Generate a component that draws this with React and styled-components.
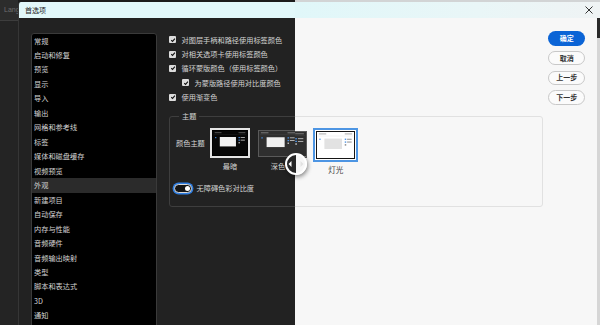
import React from 'react';
import styled, { createGlobalStyle } from 'styled-components';

const Global = createGlobalStyle`
  html, body { margin: 0; padding: 0; background: #222; }
  body { font-family: "Noto Sans CJK SC", "Noto Sans", sans-serif; }
  * { box-sizing: border-box; }
`;

const FONT = `"Noto Sans CJK SC", "Noto Sans", sans-serif`;

const Stage = styled.div`
  position: relative;
  width: 600px;
  height: 325px;
  display: flex;
  overflow: hidden;
  font-family: ${FONT};
`;

/* ---------- dark half ---------- */
const DarkSide = styled.div`
  flex: 0 0 295px;
  display: flex;
  overflow: hidden;
  background: #1c1c1c;
`;

const AppStrip = styled.div`
  flex: 0 0 18px;
  display: flex;
  flex-direction: column;
  background: #242424;
  overflow: hidden;
`;

const AppTab = styled.div`
  height: 21px;
  border-bottom: 1px solid #3d3d3d;
  background: #2c2c2c;
  color: #6e6e6e;
  font: 7px/20px "Liberation Sans", sans-serif;
  padding-left: 4px;
  white-space: nowrap;
`;

const DarkDialog = styled.div`
  flex: 1;
  min-width: 0;
  margin-top: 2px;
  display: flex;
  flex-direction: column;
  border-left: 1px solid #363636;
  border-top-left-radius: 3px;
  overflow: hidden;
`;

const TitleBar = styled.div`
  flex: 0 0 16px;
  display: flex;
  align-items: center;
  padding: 0 7px 0 6px;
  background: ${(p) => (p.$light ? 'linear-gradient(90deg, #e0f7f9 0%, #e9f6f7 60%, #eff3f4 100%)' : '#e2f8fa')};
  color: #222;
  font-size: 7px;
  justify-content: ${(p) => (p.$light ? 'flex-end' : 'flex-start')};
`;

const DarkBody = styled.div`
  flex: 1;
  display: flex;
  gap: 12px;
  padding: 14.5px 0 0 12px;
  background: #222222;
  overflow: hidden;
`;

const NavList = styled.ul`
  flex: 0 0 126px;
  height: 300px;
  margin: 0;
  padding: 0;
  list-style: none;
  background: #000;
  border: 1px solid #3a3a3a;
  border-radius: 3px;
`;

const NavItem = styled.li`
  height: 14.47px;
  line-height: 14.47px;
  padding-left: 2px;
  font-size: 7.2px;
  color: #d2d2d2;
  background: ${(p) => (p.$active ? '#2b2b2b' : 'transparent')};
  white-space: nowrap;
`;

const Main = styled.div`
  flex: none;
  display: flex;
  flex-direction: column;
  align-items: flex-start;
`;

const CheckRow = styled.label`
  height: 14.4px;
  display: flex;
  align-items: center;
  gap: 5.5px;
  padding-left: ${(p) => (p.$indent ? '13px' : '0')};
  font-size: 7.2px;
  color: #d4d4d4;
  white-space: nowrap;
`;

const Box = styled.span`
  width: 7px;
  height: 7px;
  border-radius: 1px;
  background: #dcdcdc;
  display: flex;
  align-items: center;
  justify-content: center;
`;

const Check = () => (
  <Box>
    <svg width="6" height="6" viewBox="0 0 10 10">
      <path d="M2 5.2 L4.2 7.4 L8.2 2.6" fill="none" stroke="#111" strokeWidth="1.8" />
    </svg>
  </Box>
);

const Fieldset = styled.fieldset`
  flex: none;
  width: 375px;
  height: 96px;
  margin: 7px 0 0 0;
  padding: 7px 6px 0 6px;
  border: 1px solid #3e3e3e;
  border-radius: 3px;
  min-width: 0;
`;

const Legend = styled.legend`
  margin-left: 3px;
  padding: 0 3px;
  font-size: 7.2px;
  line-height: 10px;
  color: #d4d4d4;
`;

const ThemeRow = styled.div`
  display: flex;
  align-items: flex-start;
`;

const RowLabel = styled.div`
  width: 34px;
  flex: none;
  height: 30px;
  line-height: 30px;
  font-size: 7.2px;
  color: #d4d4d4;
  white-space: nowrap;
`;

const Options = styled.div`
  display: flex;
  gap: ${(p) => p.$gap}px;
`;

const Option = styled.div`
  width: ${(p) => p.$w}px;
  display: flex;
  flex-direction: column;
  align-items: center;
  flex: none;
`;

const Frame = styled.div`
  width: 100%;
  display: flex;
  height: ${(p) => p.$h}px;
  margin-top: ${(p) => p.$mt || 0}px;
  border: ${(p) => p.$border};
  padding: ${(p) => p.$pad || 0}px;
  background: ${(p) => p.$bg || 'transparent'};
`;

const Inner = styled.div`
  flex: 1;
  display: flex;
  border: ${(p) => p.$border || 'none'};
`;

const Caption = styled.div`
  margin-top: ${(p) => p.$mt}px;
  font-size: ${(p) => p.$size}px;
  line-height: 10px;
  color: ${(p) => p.$color};
  white-space: nowrap;
`;

const palettes = {
  darkest: { bg: '#070707', line: '#6a6a6a', card: '#f2f2f2', text: '#cfcfcf', div: '#222' },
  dark: { bg: '#2f2f2f', line: '#8a8a8a', card: '#f0f0f0', text: '#d0d0d0', div: '#444' },
  light: { bg: '#ffffff', line: '#9a9a9a', card: '#e2e2e2', text: '#7a7a7a', div: '#e6e6e6' },
};

const Preview = ({ variant }) => {
  const p = palettes[variant];
  return (
    <svg width="100%" height="100%" viewBox="0 0 40 28" preserveAspectRatio="none" style={{ display: 'block' }}>
      <rect width="40" height="28" fill={p.bg} />
      <rect x="2" y="1.6" width="8" height="0.9" fill={p.line} />
      <rect x="30" y="1.6" width="8" height="0.9" fill={p.line} />
      <rect x="1" y="4" width="38" height="0.5" fill={p.div} />
      <rect x="2.5" y="7" width="1.4" height="1.4" fill="#4a90e2" />
      <rect x="8" y="7" width="19" height="11" fill={p.card} />
      <rect x="30" y="7" width="1.6" height="1.4" fill="#4a90e2" />
      <rect x="32.5" y="7.2" width="5" height="0.9" fill={p.text} />
      <rect x="30" y="10" width="1.6" height="1.4" fill="#4a90e2" />
      <rect x="32.5" y="10.2" width="5" height="0.9" fill={p.text} />
      <rect x="30" y="13" width="1.6" height="1.4" fill={p.text} />
    </svg>
  );
};

const ToggleRow = styled.div`
  margin: 12.3px 0 0 -2px;
  display: flex;
  align-items: center;
  gap: 4.5px;
  font-size: 7.2px;
  color: #d4d4d4;
  white-space: nowrap;
`;

const Switch = styled.span`
  width: 18px;
  height: 9.4px;
  border-radius: 5px;
  border: 1px solid #d8d8d8;
  box-shadow: 0 0 0 1.4px #2f7fe3;
  background: #151515;
  display: flex;
  align-items: center;
  justify-content: flex-end;
  padding-right: 1.5px;
  &::after {
    content: '';
    width: 5px;
    height: 5px;
    border-radius: 50%;
    background: #fff;
  }
`;

/* ---------- light half ---------- */
const LightSide = styled.div`
  flex: 1;
  display: flex;
  flex-direction: column;
  background: #f7f7f7;
  border-top: 2px solid #d2d4d5;
  overflow: hidden;
`;

const LightBody = styled.div`
  flex: 1;
  display: flex;
`;

const LightContent = styled.div`
  flex: 1;
  min-width: 0;
  padding-right: 5.3px;
`;

const LightPanel = styled.div`
  margin: 98.4px 0 0 -40px;
  height: 91px;
  border: 1px solid #e1e1e1;
  border-radius: 3px;
  padding: 10.6px 0 0 5.7px;
`;

const Buttons = styled.div`
  flex: 0 0 36.7px;
  margin: 13.4px 12px 0 0;
  display: flex;
  flex-direction: column;
  gap: 5.3px;
`;

const Button = styled.button`
  height: 14.4px;
  padding: 0;
  border-radius: 8px;
  border: ${(p) => (p.$primary ? 'none' : '1px solid #c8c8c8')};
  background: ${(p) => (p.$primary ? '#0b64d6' : '#fbfbfb')};
  color: ${(p) => (p.$primary ? '#fff' : '#333')};
  font-family: ${FONT};
  font-size: 7px;
  font-weight: 700;
  line-height: 1;
`;

const Scrollbar = styled.div`
  flex: 0 0 3px;
  display: flex;
  flex-direction: column;
  background: #d6d6d6;
  &::before {
    content: '';
    height: 20px;
    background: #2a2a2a;
  }
`;

const Handle = styled.div`
  position: absolute;
  left: 285px;
  top: 153px;
  width: 22px;
  height: 22px;
  border-radius: 50%;
  border: 2px solid #fff;
  background: linear-gradient(90deg, #262626 50%, #f6f6f6 50%);
  box-shadow: 1px 2px 4px rgba(0, 0, 0, 0.45);
  display: flex;
  align-items: center;
  justify-content: center;
`;

const navItems = [
  '常规', '启动和修复', '预览', '显示', '导入', '输出', '网格和参考线', '标签',
  '媒体和磁盘缓存', '视频预览', '外观', '新建项目', '自动保存', '内存与性能',
  '音频硬件', '音频输出映射', '类型', '脚本和表达式', '3D', '通知',
];

const checks = [
  { t: '对图层手柄和路径使用标签颜色' },
  { t: '对相关选项卡使用标签颜色' },
  { t: '循环蒙版颜色（使用标签颜色）' },
  { t: '为蒙版路径使用对比度颜色', indent: true },
  { t: '使用渐变色' },
];

export default function App() {
  return (
    <Stage>
      <Global />
      <DarkSide>
        <AppStrip>
          <AppTab>Lang</AppTab>
        </AppStrip>
        <DarkDialog>
          <TitleBar>首选项</TitleBar>
          <DarkBody>
            <NavList>
              {navItems.map((n) => (
                <NavItem key={n} $active={n === '外观'}>{n}</NavItem>
              ))}
            </NavList>
            <Main>
              {checks.map((c) => (
                <CheckRow key={c.t} $indent={c.indent}>
                  <Check />
                  {c.t}
                </CheckRow>
              ))}
              <Fieldset>
                <Legend>主题</Legend>
                <ThemeRow>
                  <RowLabel>颜色主题</RowLabel>
                  <Options $gap={8}>
                    <Option $w={40}>
                      <Frame $h={30} $border="2px solid #e4e4e4">
                        <Inner $border="1px solid #000">
                          <Preview variant="darkest" />
                        </Inner>
                      </Frame>
                      <Caption $mt={2.4} $size={7.2} $color="#d4d4d4">最暗</Caption>
                    </Option>
                    <Option $w={40}>
                      <Frame $h={27} $mt={2} $border="1px solid #5a5a5a">
                        <Preview variant="dark" />
                      </Frame>
                      <Caption $mt={3.7} $size={7.2} $color="#d4d4d4">深色</Caption>
                    </Option>
                  </Options>
                </ThemeRow>
                <ToggleRow>
                  <Switch />
                  无障碍色彩对比度
                </ToggleRow>
              </Fieldset>
            </Main>
          </DarkBody>
        </DarkDialog>
      </DarkSide>

      <LightSide>
        <TitleBar $light>
          <svg width="8" height="8" viewBox="0 0 8 8">
            <path d="M0.5 0.5 L7.5 7.5 M7.5 0.5 L0.5 7.5" stroke="#333" strokeWidth="1" />
          </svg>
        </TitleBar>
        <LightBody>
          <LightContent>
            <LightPanel>
              <Options $gap={6.6}>
                <Option $w={45}>
                  <Frame $h={26.6} $mt={3.4} $border="1px solid #5a5a5a">
                    <Preview variant="dark" />
                  </Frame>
                </Option>
                <Option $w={45}>
                  <Frame $h={34.4} $border="2px solid #4d95e3" $pad={1} $bg="#fff">
                    <Inner $border="1.5px solid #151515">
                      <Preview variant="light" />
                    </Inner>
                  </Frame>
                  <Caption $mt={2.4} $size={7.6} $color="#444">灯光</Caption>
                </Option>
              </Options>
            </LightPanel>
          </LightContent>
          <Buttons>
            <Button $primary>确定</Button>
            <Button>取消</Button>
            <Button>上一步</Button>
            <Button>下一步</Button>
          </Buttons>
          <Scrollbar />
        </LightBody>
      </LightSide>

      <Handle>
        <svg width="18" height="10" viewBox="0 0 18 10">
          <path d="M1.5 5 L4.5 2 L4.5 8 Z" fill="#fff" />
          <path d="M16.5 5 L13.5 2 L13.5 8 Z" fill="#e2e2e2" />
        </svg>
      </Handle>
    </Stage>
  );
}
